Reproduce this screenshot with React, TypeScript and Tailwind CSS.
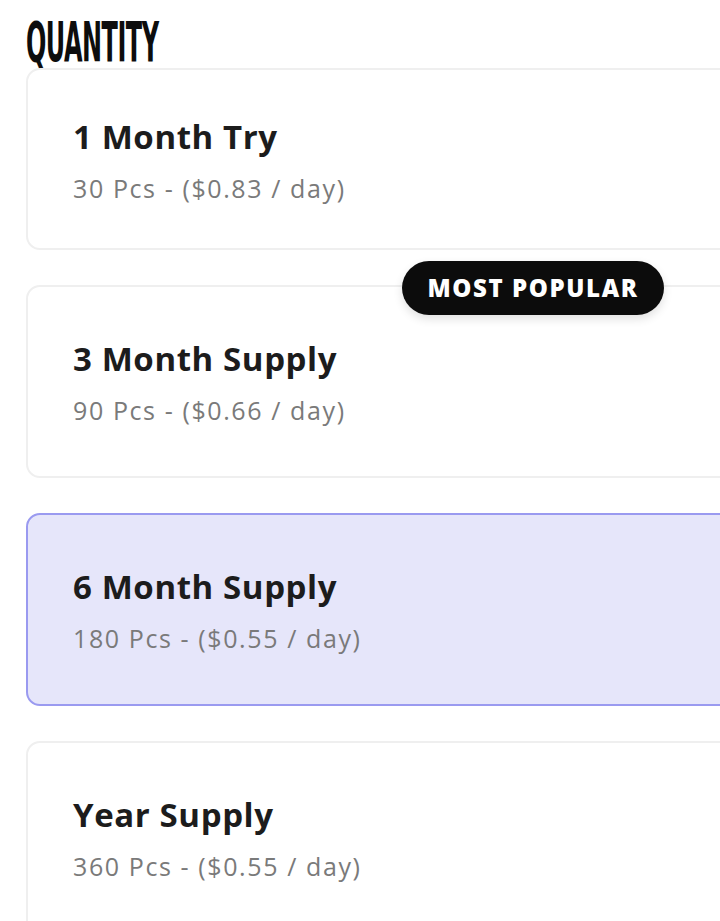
import React from "react";

interface Plan {
  title: string;
  detail: string;
  popular?: boolean;
  selected?: boolean;
}

const plans: Plan[] = [
  { title: "1 Month Try", detail: "30 Pcs - ($0.83 / day)" },
  { title: "3 Month Supply", detail: "90 Pcs - ($0.66 / day)", popular: true },
  { title: "6 Month Supply", detail: "180 Pcs - ($0.55 / day)", selected: true },
  { title: "Year Supply", detail: "360 Pcs - ($0.55 / day)" },
];

export default function App() {
  return (
    <div className="w-[720px] h-[921px] overflow-hidden bg-white" style={{ fontFamily: "'Open Sans', 'Noto Sans', sans-serif" }}>
      <div className="pl-[26px] pt-[14px]">
        {/* Heading */}
        <div className="h-[54px] leading-none">
          <span
            className="inline-block origin-left scale-x-[0.475] text-[56px] font-bold tracking-[-1px] text-[#0d0d0d]"
            style={{ fontFamily: "'Liberation Sans Narrow', 'DejaVu Sans Condensed', 'Liberation Sans', sans-serif" }}
          >
            QUANTITY
          </span>
        </div>

        {/* Plans */}
        <div className="flex w-[760px] flex-col gap-[35px]">
          {plans.map((plan, i) => (
            <div
              key={plan.title}
              className={`relative flex flex-col justify-center rounded-[14px] pl-[45px] ${
                i === 0 ? "h-[182px]" : "h-[193px]"
              } ${
                plan.selected
                  ? "border-2 border-[#9a9af0] bg-[#e6e6fa]"
                  : "border-2 border-[#efefef] bg-white"
              }`}
            >
              {plan.popular && (
                <div className="absolute left-[374px] top-[-26px] flex h-[54px] w-[262px] items-center justify-center rounded-full bg-[#0c0c0c] shadow-[0_4px_10px_rgba(0,0,0,0.12)]">
                  <span className="text-[24px] font-extrabold tracking-[1.6px] text-white">MOST POPULAR</span>
                </div>
              )}
              <div className="text-[33px] font-bold leading-[42px] tracking-[0.6px] text-[#1c1c1c]">{plan.title}</div>
              <div className="mt-[15px] text-[25px] leading-[30px] tracking-[1.6px] text-[#7a7a7a]">{plan.detail}</div>
            </div>
          ))}
        </div>
      </div>
    </div>
  );
}
